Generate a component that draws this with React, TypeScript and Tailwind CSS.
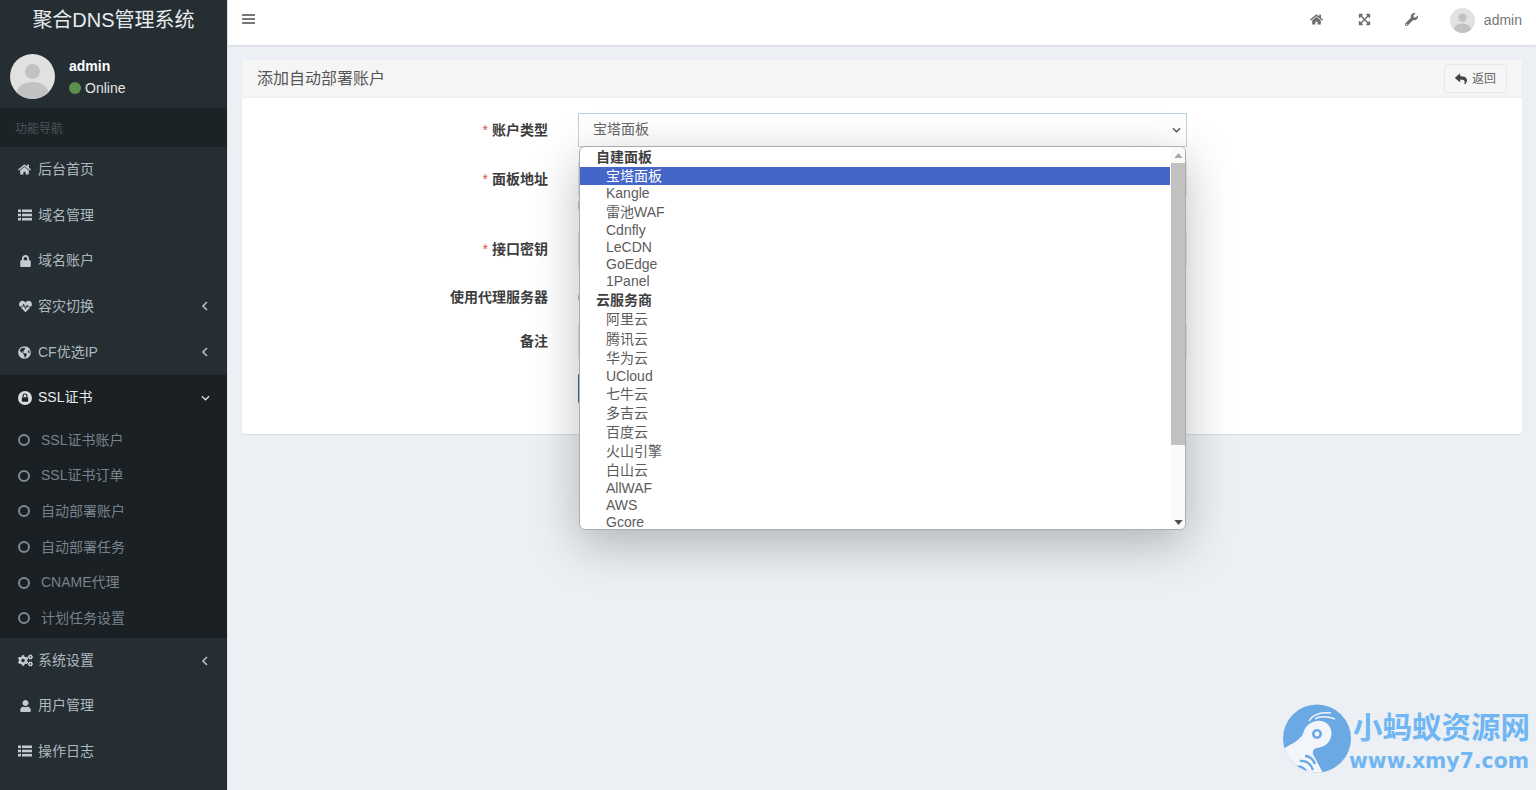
import React from "react";
import {
  FaHome, FaLock, FaHeartbeat, FaGlobeAmericas, FaCogs, FaUser,
  FaExpandArrowsAlt, FaWrench, FaReply,
} from "react-icons/fa";

const FONT = "font-['Liberation_Sans','Noto_Sans_CJK_SC',sans-serif]";

function Avatar({ className }: { className: string }) {
  return (
    <svg viewBox="0 0 45 45" className={className}>
      <defs>
        <clipPath id="avatarClip"><circle cx="22.5" cy="22.5" r="22.5" /></clipPath>
      </defs>
      <circle cx="22.5" cy="22.5" r="22.5" fill="#e1e1e1" />
      <g clipPath="url(#avatarClip)">
        <circle cx="22.5" cy="17.5" r="7.5" fill="#c2c2c2" />
        <ellipse cx="22.5" cy="38.5" rx="15.5" ry="10.5" fill="#c2c2c2" />
      </g>
    </svg>
  );
}

function SslIcon() {
  return (
    <svg viewBox="0 0 16 16" className="w-[14px] h-[14px]">
      <circle cx="8" cy="8" r="8" fill="#d8dcde" />
      <rect x="4.4" y="7" width="7.2" height="5.4" rx="0.8" fill="#1c2428" />
      <path d="M5.8 7V5.6a2.2 2.2 0 0 1 4.4 0V7" fill="none" stroke="#1c2428" strokeWidth="1.3" />
    </svg>
  );
}

function ListIcon() {
  return (
    <svg viewBox="0 0 14 12" className="w-[14px] h-[12px]" fill="currentColor">
      <rect x="0" y="0.5" width="3" height="2.6" />
      <rect x="4" y="0.5" width="10" height="2.6" />
      <rect x="0" y="4.7" width="3" height="2.6" />
      <rect x="4" y="4.7" width="10" height="2.6" />
      <rect x="0" y="8.9" width="3" height="2.6" />
      <rect x="4" y="8.9" width="10" height="2.6" />
    </svg>
  );
}

function BarsIcon() {
  return (
    <svg viewBox="0 0 13 12" className="w-[13px] h-[12px] mb-[7px] text-[#777]" fill="currentColor">
      <rect x="0" y="1" width="13" height="2" rx="0.5" />
      <rect x="0" y="5" width="13" height="2" rx="0.5" />
      <rect x="0" y="9" width="13" height="2" rx="0.5" />
    </svg>
  );
}

function ChevronLeft() {
  return (
    <svg viewBox="0 0 6 10" className="w-[6px] h-[10px] mr-[2px] text-[#aeb9be]" fill="none" stroke="currentColor" strokeWidth="1.7">
      <path d="M5 1 1 5l4 4" />
    </svg>
  );
}

function ChevronDown({ className }: { className: string }) {
  return (
    <svg viewBox="0 0 10 6" className={className} fill="none" stroke="currentColor" strokeWidth="1.5">
      <path d="M1 1l4 4 4-4" />
    </svg>
  );
}

function NavItem({ icon, label, arrow, h }: { icon: React.ReactNode; label: string; arrow?: boolean; h: string }) {
  return (
    <div className={`flex items-center pl-[18px] pr-[17px] text-[14px] text-[#aeb9be] ${h}`}>
      <span className="w-[20px] flex items-center text-[#c3cbcf]">{icon}</span>
      <span className="flex-1">{label}</span>
      {arrow && <ChevronLeft />}
    </div>
  );
}

function SubItem({ label }: { label: string }) {
  return (
    <div className="flex items-center h-[35.6px] pl-[18px] text-[14px] text-[#77838a]">
      <span className="w-[12px] h-[12px] rounded-full border-2 border-[#7f8b91] mr-[11px]" />
      <span>{label}</span>
    </div>
  );
}

function Sidebar() {
  return (
    <aside className="w-[227px] shrink-0 h-full bg-[#252e33] flex flex-col">
      <div className="h-[45px] pb-[5px] flex items-center justify-center text-[20px] text-[#e8ebec]">聚合DNS管理系统</div>
      <div className="h-[63px] flex items-center pl-[10px]">
        <Avatar className="w-[45px] h-[45px]" />
        <div className="ml-[14px] pt-[1px]">
          <div className="text-[14px] font-bold text-white leading-[21px]">admin</div>
          <div className="flex items-center text-[14px] text-[#e3e6e7] leading-[22px]">
            <span className="w-[12px] h-[12px] rounded-full bg-[#5f8f4c] mr-[4px]" />
            Online
          </div>
        </div>
      </div>
      <div className="h-[39px] pt-[2px] bg-[#1c2327] flex items-center pl-[15px] text-[12px] text-[#4b5459]">功能导航</div>
      <div className="h-[228px]">
        <NavItem h="h-[45px]" icon={<FaHome className="w-[13px] h-[13px]" />} label="后台首页" />
        <NavItem h="h-[46px]" icon={<ListIcon />} label="域名管理" />
        <NavItem h="h-[45px]" icon={<FaLock className="w-[11px] h-[12px] ml-[2px]" />} label="域名账户" />
        <NavItem h="h-[46px]" icon={<FaHeartbeat className="w-[15px] h-[13px]" />} label="容灾切换" arrow />
        <NavItem h="h-[46px]" icon={<FaGlobeAmericas className="w-[13px] h-[13px]" />} label="CF优选IP" arrow />
      </div>
      <div className="bg-[#1a2024] h-[263px]">
        <div className="flex items-center h-[45px] pl-[18px] pr-[17px] text-[14px] text-[#e8ebec]">
          <span className="w-[20px]"><SslIcon /></span>
          <span className="flex-1">SSL证书</span>
          <ChevronDown className="w-[9px] h-[6px] text-[#d8dcde]" />
        </div>
        <div className="pt-[2.5px]">
          <SubItem label="SSL证书账户" />
          <SubItem label="SSL证书订单" />
          <SubItem label="自动部署账户" />
          <SubItem label="自动部署任务" />
          <SubItem label="CNAME代理" />
          <SubItem label="计划任务设置" />
        </div>
      </div>
      <NavItem h="h-[45px]" icon={<FaCogs className="w-[15px] h-[13px]" />} label="系统设置" arrow />
      <NavItem h="h-[45.5px]" icon={<FaUser className="w-[11px] h-[12px] ml-[2px]" />} label="用户管理" />
      <NavItem h="h-[45.5px]" icon={<ListIcon />} label="操作日志" />
    </aside>
  );
}

function TopBar() {
  return (
    <header className="h-[45px] shrink-0 bg-white shadow-[0_1px_2px_rgba(0,0,0,0.12)] flex items-center pl-[14px] pr-[14px] text-[#666] relative">
      <BarsIcon />
      <div className="flex-1" />
      <FaHome className="w-[13px] h-[13px] mb-[7px] mr-[35px] text-[#6f6f6f]" />
      <FaExpandArrowsAlt className="w-[13px] h-[13px] mb-[7px] mr-[34px] text-[#6f6f6f]" />
      <FaWrench className="w-[13px] h-[13px] mb-[7px] mr-[32px] text-[#6f6f6f]" />
      <Avatar className="w-[25px] h-[25px] mb-[4px] mr-[9px]" />
      <span className="text-[14px] mb-[5px] text-[#777]">admin</span>
    </header>
  );
}

function Label({ text, req }: { text: string; req?: boolean }) {
  return (
    <div className="w-[306px] shrink-0 text-right text-[14px] font-bold text-[#3d3d3d]">
      {req && <span className="text-[#d9534f] font-normal mr-[4px]">*</span>}
      {text}
    </div>
  );
}

const inputCls = "w-[609px] h-[34px] border border-[#e6e9ed] bg-white";

function Form() {
  return (
    <div className="pt-[15px] h-[336px]">
      <div className="flex items-center h-[34px]">
        <Label text="账户类型" req />
        <div className="ml-[30px] w-[609px] h-[34px] pb-[1px] border border-[#b9d2e0] bg-white flex items-center pl-[14px] pr-[5px] text-[14px] text-[#666]">
          <span className="flex-1">宝塔面板</span>
          <ChevronDown className="w-[9px] h-[6px] text-[#555]" />
        </div>
      </div>
      <div className="flex items-center h-[34px] mt-[15px]">
        <Label text="面板地址" req />
        <div className={`ml-[30px] ${inputCls}`} />
      </div>
      <div className="ml-[336px] mt-[5px] w-[2px] h-[8px] bg-[#c9c9c9]" />
      <div className="flex items-center h-[34px] mt-[23px]">
        <Label text="接口密钥" req />
        <div className={`ml-[30px] ${inputCls}`} />
      </div>
      <div className="flex items-center h-[20px] mt-[21px]">
        <Label text="使用代理服务器" />
        <div className="ml-[30px] w-[13px] h-[13px] rounded-full border border-[#8fa3bd] bg-white" />
      </div>
      <div className="flex items-center h-[34px] mt-[17px]">
        <Label text="备注" />
        <div className={`ml-[30px] ${inputCls}`} />
      </div>
      <div className="mt-[15px] ml-[336px] w-[76px] h-[31px] rounded-[3px] bg-[#3c6c9c]" />
    </div>
  );
}

type Opt = { t: string; h: string; group?: boolean; sel?: boolean };
const OPTIONS: Opt[] = [
  { t: "自建面板", h: "h-[20px]", group: true },
  { t: "宝塔面板", h: "h-[18px]", sel: true },
  { t: "Kangle", h: "h-[17px]" },
  { t: "雷池WAF", h: "h-[20px]" },
  { t: "Cdnfly", h: "h-[17px]" },
  { t: "LeCDN", h: "h-[17px]" },
  { t: "GoEdge", h: "h-[17px]" },
  { t: "1Panel", h: "h-[17px]" },
  { t: "云服务商", h: "h-[20px]", group: true },
  { t: "阿里云", h: "h-[19px]" },
  { t: "腾讯云", h: "h-[20px]" },
  { t: "华为云", h: "h-[18px]" },
  { t: "UCloud", h: "h-[18px]" },
  { t: "七牛云", h: "h-[19px]" },
  { t: "多吉云", h: "h-[19px]" },
  { t: "百度云", h: "h-[19px]" },
  { t: "火山引擎", h: "h-[19px]" },
  { t: "白山云", h: "h-[19px]" },
  { t: "AllWAF", h: "h-[17px]" },
  { t: "AWS", h: "h-[17px]" },
  { t: "Gcore", h: "h-[17px]" },
];

function Dropdown() {
  return (
    <div className="absolute left-[579px] top-[146px] w-[607px] h-[384px] bg-white rounded-[6px] overflow-hidden flex border border-[#a7adb0] shadow-[0_14px_48px_rgba(0,0,0,0.26)] z-10">
      <div className="flex-1 overflow-hidden">
        {OPTIONS.map((o) => (
          <div
            key={o.t}
            className={`flex items-center text-[14px] ${o.h} ${o.group ? "pl-[16px] font-bold text-[#3f3f3f]" : "pl-[26px]"} ${o.sel ? "bg-[#4566c9] text-white" : ""} ${!o.group && !o.sel ? "text-[#5c5c5c]" : ""}`}
          >
            {o.t}
          </div>
        ))}
      </div>
      <div className="w-[15px] shrink-0 bg-[#fafafa] border-l border-white flex flex-col items-center">
        <div className="h-[16px] flex items-center justify-center">
          <svg viewBox="0 0 10 6" className="w-[9px] h-[5px]"><path d="M5 0 10 6H0z" fill="#a8a8a8" /></svg>
        </div>
        <div className="w-full h-[282px] bg-[#c1c1c1]" />
        <div className="flex-1" />
        <div className="h-[14px] flex items-center justify-center">
          <svg viewBox="0 0 10 6" className="w-[9px] h-[5px]"><path d="M0 0H10L5 6z" fill="#505050" /></svg>
        </div>
      </div>
    </div>
  );
}

function Watermark() {
  return (
    <div className="absolute left-[1283px] top-[704px] w-[250px] h-[70px] z-20">
      <svg viewBox="0 0 68 69" className="absolute left-0 top-0 w-[68px] h-[69px]">
        <defs>
          <clipPath id="wmClip"><circle cx="34" cy="34.5" r="34" /></clipPath>
        </defs>
        <circle cx="34" cy="34.5" r="34" fill="#6aa9e4" />
        <g clipPath="url(#wmClip)">
          <path d="M2 44 C8 40 16 37 20 30 C22 21 30 16 38 17 C46 18 50 26 48 33 C46 40 41 43 34 44 C30 45 28 48 32 54 L40 69 L0 69 L0 44 Z" fill="#f2f5fa" />
          <path d="M22 52 C26 52 30 55 32 60 M17 57 C23 56 28 60 30 66 M14 63 C18 62 22 64 24 69" fill="none" stroke="#6aa9e4" strokeWidth="2.4" />
          <circle cx="34" cy="30" r="5" fill="#6aa9e4" />
          <circle cx="34" cy="30" r="2.4" fill="#f2f5fa" />
          <path d="M26 17 C30 10 38 8 48 9 M32 15 C36 12 44 12 52 15" fill="none" stroke="#f2f5fa" strokeWidth="1.5" />
        </g>
      </svg>
      <div className="absolute left-[70px] top-[3px] text-[29.5px] leading-[36px] font-bold text-[#6fb6f2] whitespace-nowrap font-['Noto_Sans_CJK_SC',sans-serif]">小蚂蚁资源网</div>
      <div className="absolute left-[66px] top-[43px] text-[20.4px] leading-[28px] font-bold text-[#6fb6f2] whitespace-nowrap font-['DejaVu_Sans',sans-serif]">www.xmy7.com</div>
    </div>
  );
}

export default function App() {
  return (
    <div className={`relative w-[1536px] h-[790px] overflow-hidden flex bg-[#ecf0f5] ${FONT}`}>
      <Sidebar />
      <main className="flex-1 flex flex-col min-w-0 border-l border-[#dfe3e8]">
        <TopBar />
        <section className="pt-[15px] pl-[14px] pr-[14px]">
          <div className="bg-white rounded-[3px] shadow-[0_1px_1px_rgba(0,0,0,0.08)]">
            <div className="h-[38px] bg-[#f5f5f5] flex items-center pl-[15px] pr-[15px] border-b border-[#eeeeee]">
              <span className="flex-1 text-[16px] text-[#555]">添加自动部署账户</span>
              <div className="w-[63px] h-[29px] border border-[#e8e8e8] rounded-[3px] bg-[#f6f6f6] flex items-center justify-center text-[12px] text-[#666]">
                <FaReply className="w-[12px] h-[12px] mr-[5px] text-[#444]" />
                返回
              </div>
            </div>
            <Form />
          </div>
        </section>
      </main>
      <Dropdown />
      <Watermark />
    </div>
  );
}
